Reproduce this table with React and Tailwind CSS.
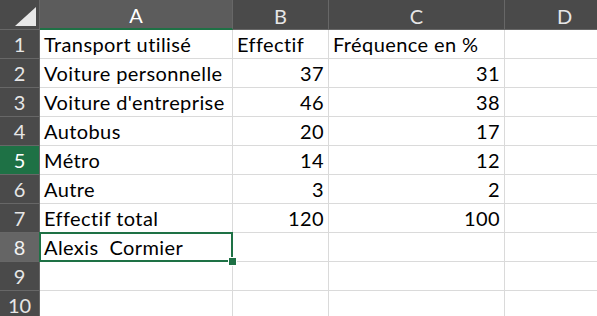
const cols = [
  { key: 'A', w: 'w-[193px]' },
  { key: 'B', w: 'w-[96px]' },
  { key: 'C', w: 'w-[176px]' },
  { key: 'D', w: 'w-[120px]' },
];

const rows = [
  ['Transport utilisé', 'Effectif', 'Fréquence en %', ''],
  ['Voiture personnelle', 37, 31, ''],
  ["Voiture d'entreprise", 46, 38, ''],
  ['Autobus', 20, 17, ''],
  ['Métro', 14, 12, ''],
  ['Autre', 3, 2, ''],
  ['Effectif total', 120, 100, ''],
  ['Alexis  Cormier', '', '', ''],
  ['', '', '', ''],
  ['', '', '', ''],
];

function Corner() {
  return (
    <div className="w-[40px] h-[30px] shrink-0 bg-[#4a4a4a] border-r border-b border-[#676767] relative">
      <svg className="absolute left-[15px] top-[7px]" width="22" height="20" viewBox="0 0 22 20">
        <polygon points="21,0 21,19 0,19" fill="#e8e8e8" />
      </svg>
    </div>
  );
}

function RowHeader({ n }) {
  let cls = 'bg-[#4a4a4a] text-[#e6e6e6]';
  if (n === 5) cls = 'bg-[#1e7145] text-white';
  if (n === 8) cls = 'bg-[#656565] text-[#f2f2f2]';
  return (
    <div className={`w-[40px] h-[29px] shrink-0 flex items-end justify-center pb-[2px] border-r border-b border-[#676767] text-[20px] leading-none ${cls}`}>
      <span className="pb-[2px]">{n}</span>
    </div>
  );
}

export default function App() {
  return (
    <div
      className="w-[597px] h-[316px] overflow-hidden bg-white text-black"
      style={{ fontFamily: 'Lato, "Open Sans", sans-serif' }}
    >
      <div className="flex">
        <Corner />
        {cols.map((c) => (
          <div
            key={c.key}
            className={`${c.w} h-[30px] shrink-0 flex items-center justify-center text-[20px] border-r border-[#676767] ${
              c.key === 'A'
                ? 'bg-[#5c5c5c] text-white border-b-2 border-b-[#1e7145]'
                : 'bg-[#4a4a4a] text-[#e6e6e6] border-b border-b-[#676767]'
            }`}
          >
            <span className="pt-[2px]">{c.key}</span>
          </div>
        ))}
      </div>

      {rows.map((r, i) => (
        <div key={i} className="flex">
          <RowHeader n={i + 1} />
          {r.map((v, j) => {
            const num = typeof v === 'number';
            const selected = i === 7 && j === 0;
            return (
              <div
                key={j}
                className={`${cols[j].w} h-[29px] shrink-0 relative flex items-end px-[4px] pb-[4px] border-r border-b border-[#dadada] text-[20px] tracking-[0.4px] leading-none whitespace-pre ${
                  num ? 'justify-end' : 'justify-start'
                }`}
              >
                {v}
                {selected && (
                  <>
                    <div className="absolute z-10 -left-[1px] -top-[1px] -right-[1px] -bottom-[1px] border-2 border-[#1e7145] pointer-events-none" />
                    <div className="absolute z-20 -right-[5px] -bottom-[5px] w-[9px] h-[9px] bg-[#1e7145] border border-white" />
                  </>
                )}
              </div>
            );
          })}
        </div>
      ))}
    </div>
  );
}
